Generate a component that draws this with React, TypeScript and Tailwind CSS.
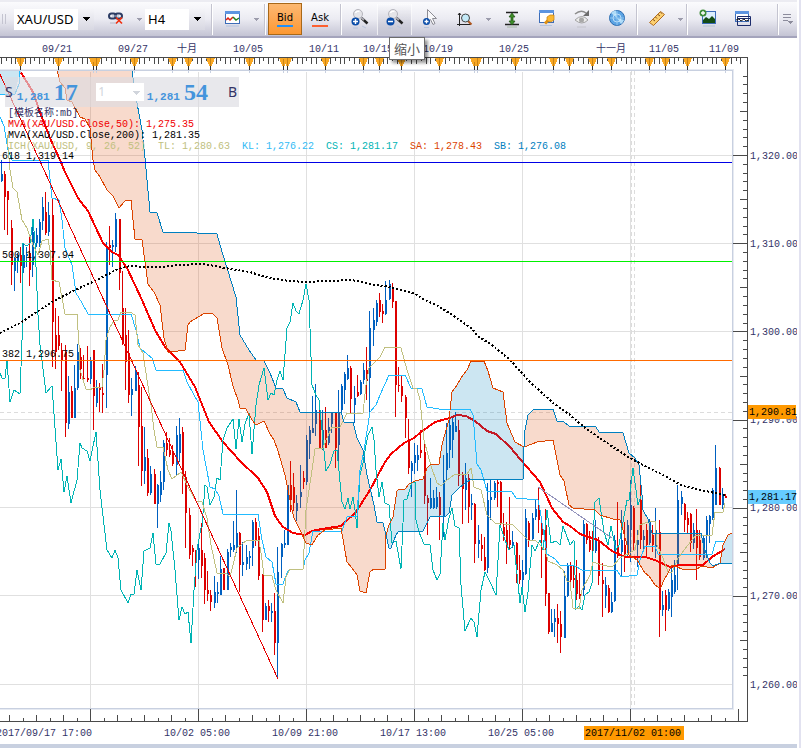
import type { ReactNode } from 'react';

type Candle = [number, number, number, number, number];

// [x, high, low, bodyTop, bodyBottom]
const UP: Candle[] = [
  [1, 160, 182, 174, 181], [14, 257, 291, 258, 271], [17, 253, 273, 255, 262], [23, 243, 273, 255, 268],
  [26, 247, 267, 254, 256], [32, 223, 277, 232, 265], [36, 228, 247, 235, 243], [39, 219, 247, 222, 243],
  [42, 197, 230, 207, 221], [48, 202, 236, 215, 232], [68, 376, 429, 392, 424], [74, 365, 418, 388, 418],
  [77, 344, 390, 352, 388], [90, 357, 384, 360, 379], [96, 380, 407, 387, 403], [106, 242, 408, 247, 375],
  [112, 240, 267, 245, 247], [115, 213, 252, 219, 247], [131, 378, 416, 389, 395], [135, 366, 391, 372, 391],
  [144, 427, 484, 457, 471], [150, 466, 495, 474, 493], [157, 484, 528, 485, 504], [160, 471, 502, 482, 495],
  [163, 440, 490, 443, 482], [176, 426, 476, 435, 465], [179, 418, 462, 434, 453], [198, 540, 579, 548, 560],
  [214, 576, 608, 592, 603], [217, 582, 603, 592, 594], [220, 556, 595, 569, 595], [227, 549, 590, 552, 590],
  [230, 543, 557, 547, 550], [233, 521, 552, 545, 550], [236, 490, 553, 533, 548], [242, 542, 576, 562, 565],
  [246, 545, 570, 557, 564], [249, 551, 569, 556, 558], [252, 520, 566, 522, 548], [265, 603, 620, 606, 620],
  [271, 603, 622, 611, 613], [277, 547, 678, 572, 643], [281, 543, 578, 544, 557], [284, 530, 548, 543, 545],
  [287, 485, 545, 485, 545], [296, 495, 521, 503, 511], [300, 465, 508, 492, 497], [306, 435, 485, 440, 482],
  [309, 426, 459, 430, 444], [312, 396, 433, 428, 433], [315, 384, 436, 410, 424], [322, 410, 450, 430, 448],
  [328, 418, 445, 427, 443], [331, 412, 433, 413, 424], [338, 390, 470, 412, 445], [341, 384, 412, 386, 410],
  [344, 372, 404, 374, 390], [347, 355, 380, 368, 379], [354, 386, 423, 398, 405], [360, 380, 395, 382, 394],
  [363, 363, 384, 370, 380], [369, 311, 412, 328, 378], [373, 308, 346, 320, 330], [376, 300, 326, 303, 322],
  [385, 281, 315, 300, 314], [389, 280, 300, 284, 299], [411, 461, 497, 463, 471], [414, 443, 474, 455, 463],
  [417, 445, 471, 455, 460], [430, 478, 509, 498, 508], [433, 490, 509, 498, 508], [436, 487, 509, 497, 507],
  [443, 455, 537, 480, 517], [446, 423, 480, 453, 470], [449, 420, 468, 425, 450], [452, 418, 458, 422, 440],
  [455, 412, 432, 426, 432], [465, 463, 510, 478, 490], [471, 494, 520, 503, 505], [478, 525, 558, 540, 544],
  [487, 483, 573, 500, 568], [490, 480, 520, 497, 500], [494, 481, 500, 483, 498], [512, 531, 548, 542, 545],
  [522, 560, 588, 572, 580], [525, 509, 575, 518, 574], [532, 513, 541, 518, 539], [535, 500, 520, 509, 517],
  [551, 609, 632, 623, 632], [554, 609, 637, 618, 622], [564, 571, 638, 596, 638], [567, 563, 597, 565, 596],
  [583, 520, 596, 524, 590], [595, 520, 553, 538, 551], [605, 577, 608, 585, 596], [611, 592, 613, 602, 612],
  [614, 535, 602, 540, 601], [621, 510, 576, 540, 552], [627, 520, 557, 525, 555], [630, 480, 562, 505, 530],
  [637, 530, 567, 540, 545], [643, 530, 550, 536, 540], [649, 519, 545, 521, 543], [655, 508, 558, 530, 547],
  [662, 591, 616, 605, 610], [668, 589, 611, 592, 609], [671, 568, 617, 580, 597], [674, 560, 594, 575, 592],
  [677, 485, 590, 500, 565], [681, 491, 515, 497, 504], [693, 523, 549, 530, 543], [703, 535, 560, 538, 558],
  [706, 516, 558, 520, 535], [709, 515, 543, 516, 524], [712, 488, 520, 490, 518], [715, 445, 505, 468, 505],
  [722, 488, 509, 495, 505],
];

const DOWN: Candle[] = [
  [4, 171, 230, 174, 197], [7, 191, 235, 191, 200], [11, 220, 285, 228, 265], [20, 247, 283, 255, 266],
  [29, 237, 286, 253, 270], [45, 192, 235, 212, 233], [52, 198, 367, 215, 322], [55, 308, 369, 335, 352],
  [58, 316, 350, 335, 346], [61, 343, 391, 350, 361], [65, 345, 437, 352, 423], [71, 386, 418, 391, 418],
  [80, 348, 379, 357, 369], [83, 355, 379, 378, 379], [87, 346, 382, 378, 380], [93, 350, 430, 350, 396],
  [99, 383, 412, 388, 390], [102, 364, 413, 393, 395], [109, 226, 265, 245, 248], [119, 219, 290, 219, 273],
  [122, 271, 345, 308, 344], [125, 308, 390, 335, 362], [128, 330, 403, 353, 395], [138, 372, 466, 385, 427],
  [141, 387, 486, 426, 471], [147, 449, 496, 458, 493], [154, 469, 504, 474, 504], [166, 432, 456, 443, 450],
  [169, 438, 457, 450, 455], [172, 445, 466, 452, 464], [182, 427, 494, 432, 478], [185, 471, 548, 477, 513],
  [189, 508, 559, 515, 555], [192, 545, 566, 548, 552], [195, 550, 587, 552, 563], [201, 523, 578, 550, 566],
  [204, 553, 604, 558, 590], [207, 571, 601, 590, 594], [210, 590, 611, 595, 602], [223, 568, 590, 568, 590],
  [239, 532, 592, 533, 565], [255, 518, 546, 522, 540], [258, 528, 580, 536, 576], [262, 574, 632, 575, 620],
  [268, 600, 622, 606, 611], [274, 593, 655, 611, 643], [290, 461, 512, 485, 500], [293, 473, 511, 487, 503],
  [303, 471, 489, 478, 482], [319, 404, 449, 417, 449], [325, 407, 448, 430, 448], [335, 412, 468, 412, 448],
  [350, 366, 413, 368, 399], [357, 375, 397, 392, 396], [366, 347, 400, 370, 381], [379, 293, 317, 300, 312],
  [382, 304, 323, 311, 314], [392, 283, 308, 287, 302], [395, 301, 417, 301, 385], [398, 367, 392, 385, 386],
  [401, 376, 402, 386, 396], [405, 395, 438, 397, 418], [408, 419, 474, 440, 468], [420, 430, 458, 450, 453],
  [424, 440, 504, 452, 496], [427, 495, 535, 498, 503], [439, 492, 540, 497, 515], [458, 420, 486, 430, 476],
  [462, 472, 524, 475, 489], [468, 474, 523, 478, 507], [474, 503, 563, 504, 544], [481, 534, 561, 545, 549],
  [484, 537, 571, 557, 570], [497, 480, 507, 482, 484], [500, 481, 525, 482, 523], [503, 513, 541, 527, 536],
  [506, 522, 564, 530, 545], [509, 497, 550, 540, 545], [516, 542, 583, 543, 570], [519, 555, 584, 570, 580],
  [528, 521, 547, 523, 541], [538, 487, 533, 508, 520], [541, 517, 578, 528, 535], [545, 509, 606, 525, 594],
  [548, 593, 634, 593, 632], [557, 604, 643, 618, 624], [560, 611, 653, 624, 637], [570, 562, 590, 565, 580],
  [573, 565, 588, 578, 580], [576, 560, 600, 580, 594], [579, 573, 599, 594, 597], [586, 523, 544, 524, 540],
  [589, 531, 552, 540, 550], [592, 531, 553, 542, 550], [598, 537, 585, 540, 576], [602, 563, 617, 580, 584],
  [608, 585, 613, 588, 612], [617, 502, 558, 545, 556], [624, 522, 572, 545, 558], [633, 506, 550, 508, 543],
  [640, 480, 549, 500, 540], [646, 524, 557, 530, 545], [652, 525, 552, 535, 545], [659, 520, 637, 532, 610],
  [665, 590, 631, 595, 610], [684, 503, 532, 504, 520], [687, 512, 533, 518, 525], [690, 513, 552, 514, 543],
  [696, 509, 580, 530, 548], [699, 530, 560, 540, 557], [719, 467, 505, 468, 505], [725, 494, 498, 496, 498],
];

const CHIKOU =
  '0,373 2,378 5,378 7,361 10,402 14,390 20,394 22,340 22,243 27,246 30,243 33,219 35,243 38,315 40,345 46,393 52,386 58,470 61,459 64,492 67,476 71,503 77,480 80,443 82,448 87,451 90,461 96,432 100,490 104,525 107,550 112,558 115,550 118,558 121,590 128,603 131,594 134,594 137,570 141,590 144,551 150,548 153,533 156,564 160,564 166,553 169,523 171,531 175,570 179,620 182,607 185,614 188,612 191,643 194,590 197,550 201,528 202,527 205,485 207,487 210,505 214,497 217,478 220,480 223,440 227,428 233,419 236,449 239,419 242,442 245,424 249,413 252,454 256,405 259,385 264,368 268,400 271,393 274,395 277,380 280,371 283,380 287,328 290,322 293,303 296,311 299,314 303,300 306,284 309,300 312,385 316,395 319,400 322,430 326,471 330,464 334,451 337,450 340,482 342,502 345,509 348,498 350,509 353,497 355,510 357,528 360,475 363,463 366,445 368,435 372,427 374,440 376,470 379,497 382,482 385,503 389,505 392,543 396,541 401,569 404,500 407,499 412,482 415,482 416,520 419,532 424,544 430,545 433,570 437,580 440,574 443,523 445,540 449,518 452,508 455,526 459,528 461,585 465,631 471,618 474,622 477,637 481,590 485,572 490,582 496,595 500,525 505,540 509,550 514,545 520,603 522,587 525,612 528,592 532,545 535,551 540,540 543,550 547,510 551,543 556,541 560,545 563,526 570,545 574,540 576,609 579,606 582,610 585,595 589,592 592,583 594,520 595,502 599,498 604,532 608,545 611,526 616,550 619,545 623,522 627,500 629,500 633,468 638,505 641,496';

const KIJUN =
  '0,117 4,126 8,150 12,160 48,160 52,198 59,200 62,220 65,248 72,265 76,293 82,303 88,314 131,314 136,330 140,348 148,355 152,358 156,370 183,370 187,382 194,395 198,402 203,450 210,487 215,489 219,496 223,514 258,514 262,540 266,557 272,562 276,584 283,584 287,573 290,569 303,569 305,560 309,553 313,531 342,531 347,517 357,516 360,470 364,450 368,425 370,412 376,405 380,395 389,375 405,375 411,388 422,389 427,407 439,409 470,409 473,415 477,464 481,470 487,491 512,492 516,498 538,500 540,510 547,554 555,559 560,565 575,566 582,570 617,570 621,577 637,575 640,560 645,546 655,546 658,554 712,554 716,541 725,541';

const TENKAN =
  '7,135 10,170 13,188 17,192 22,220 27,228 33,245 38,255 42,241 48,239 50,250 52,280 59,282 62,298 65,314 77,314 79,345 80,370 86,389 90,390 95,387 102,387 104,370 106,340 110,327 114,321 118,320 121,312 130,312 135,315 138,345 143,353 147,380 151,405 154,430 157,447 163,447 168,470 172,479 181,472 188,487 196,501 202,502 207,518 211,545 217,573 226,573 230,577 233,565 237,548 247,540 259,540 262,560 264,575 272,576 276,590 283,603 286,577 290,569 303,569 306,510 312,470 315,449 323,448 326,440 332,427 340,427 347,413 363,413 366,385 369,368 380,357 385,347 401,348 407,370 413,388 417,389 420,400 424,440 431,466 437,483 441,486 447,480 454,475 467,474 471,468 474,487 481,490 487,515 495,523 513,525 520,532 528,540 536,541 545,550 548,561 557,565 563,570 567,581 570,582 573,608 579,609 582,590 590,575 593,562 602,565 612,567 620,558 635,550 640,525 645,523 655,521 657,545 663,558 668,572 672,572 678,558 688,545 696,535 712,535 715,512 723,512 725,503';

const SPAN_B_1 =
  '132,70 134,85 137,103 142,130 145,158 150,212 157,213 163,232 197,233 217,234 223,255 236,297 240,335 249,350 256,360 264,361 270,373 276,388 283,389 287,398 296,402 300,412 341,412 344,422 353,422 357,438 363,450 367,475 374,505 377,522 383,523 386,535';
const SPAN_B_2 = '386,535 389,548 391,548 396,535 399,531 423,531 430,517 446,516 449,513 452,495 460,487 470,480 523,479 524,447';
const SPAN_B_3 =
  '524,447 525,430 528,415 534,409 553,409 557,421 564,422 569,426 596,427 599,432 623,433 629,453 635,458 639,465 642,495 643,510 648,519 652,533 701,533 704,548 710,563 712,565';
const SPAN_B_4 = '712,565 715,565 721,563 732,563';

const SPAN_A_1 =
  '57,70 60,82 65,88 67,100 72,102 80,117 85,119 90,128 93,160 95,170 100,177 107,190 113,196 119,208 125,201 131,200 135,239 142,240 145,262 148,284 154,292 160,305 164,338 168,352 171,352 185,350 188,325 190,322 198,317 205,313 213,314 217,318 222,348 228,365 233,386 238,400 240,408 246,409 252,420 256,425 264,421 270,434 274,440 278,451 285,475 292,510 294,518 300,530 306,543 312,545 318,535 325,530 341,528 347,562 352,568 357,575 360,591 366,593 370,572 374,569 385,569 386,535';
const SPAN_A_2 =
  '386,535 389,525 393,517 397,491 399,489 405,489 409,484 415,481 423,479 427,468 431,464 439,464 442,445 446,430 449,420 452,392 457,385 463,375 467,370 471,361 484,361 488,371 493,388 503,392 507,423 509,428 515,442 524,447';
const SPAN_A_3 =
  '524,447 532,444 537,442 553,440 557,460 560,475 564,481 569,505 573,508 595,510 600,515 613,519 620,520 623,530 627,545 629,555 637,560 645,573 649,576 655,585 658,587 661,587 664,580 668,573 672,565 677,567 682,569 695,570 702,566 712,568';
const SPAN_A_4 = '712,568 720,563 723,545 728,535 732,533';

const MVA50 =
  '20,71 33,92 41,115 50,138 60,160 65,172 78,198 88,211 95,226 103,243 112,252 118,255 127,268 142,300 155,330 165,347 180,362 195,387 209,422 223,442 240,461 258,478 267,492 275,516 283,527 293,533 305,535 312,531 322,529 341,526 356,512 370,490 385,462 391,454 404,443 414,438 421,432 435,422 450,418 457,415 466,416 475,421 487,431 496,434 510,447 520,459 540,482 552,508 563,522 570,526 580,534 598,540 612,551 625,557 645,557 655,560 670,567 680,565 703,565 712,557 725,549';

const MVA200 =
  '0,333 10,328 20,323 52,302 75,290 95,281 118,269 130,266 147,267 160,267 180,265 203,264 215,266 230,269 250,272 262,276 275,279 290,281 306,282 350,280 358,281 370,284 390,287 402,290 415,294 425,300 440,307 455,317 472,329 478,336 493,346 503,354 510,360 530,382 552,402 570,415 584,427 610,445 628,457 643,465 663,475 683,486 710,492 725,495';

const GRID_X = [90, 198, 306, 414, 522, 630];
const GRID_Y = [155, 243, 331, 419, 507, 595, 684];

const TOP_DATES: [number, string][] = [
  [57, '09/21'], [133, '09/27'], [187, '十月'], [248, '10/05'], [324, '10/11'], [378, '10/15'],
  [438, '10/19'], [514, '10/25'], [611, '十一月'], [664, '11/05'], [724, '11/09'],
];

const SESSIONS = [
  20, 58, 93, 96, 134, 172, 188, 210, 249, 283, 287, 325, 363, 379, 401, 439, 474, 477, 515, 553, 569, 592, 611, 649,
  665, 687, 725,
];

const BOTTOM_DATES: [number, string][] = [
  [44, '2017/09/17 17:00'], [197, '10/02 05:00'], [305, '10/09 21:00'], [413, '10/17 13:00'], [521, '10/25 05:00'],
];

const FIBS: [number, string, string, string][] = [
  [162, '#0000e6', '618', '1,319.14'],
  [261, '#00f000', '500', '1,307.94'],
  [360, '#ff6a00', '382', '1,296.75'],
];

const reverse = (points: string) => points.split(' ').reverse().join(' ');

function Candles({ data, color }: { data: Candle[]; color: string }) {
  return (
    <g fill={color}>
      {data.map(([x, high, low, top, bottom]) => (
        <g key={x}>
          <rect x={x} y={high} width={1} height={low - high} />
          <rect x={x} y={top} width={2} height={Math.max(bottom - top, 1)} />
        </g>
      ))}
    </g>
  );
}

function TopRuler() {
  const minor = Array.from({ length: 156 }, (_, i) => Math.round(1 + i * 4.77)).filter((x) => x < 746);
  return (
    <g>
      <g fill="#4a4a4a">
        <rect x={0} y={57} width={748} height={1} />
        {minor.map((x, i) => (
          <rect key={x} x={x} y={58} width={1} height={i % 3 === 1 ? 3 : 6} />
        ))}
      </g>
      {SESSIONS.map((x) => (
        <g key={x}>
          <path d={`M${x - 4} 58h9l-2 5-2 4h-1l-2-4z`} fill="#f9a825" />
          <rect x={x} y={58} width={1} height={8} fill="#c88418" />
          <rect x={x} y={66} width={1} height={4} fill="#333" />
          <rect x={x} y={70} width={1} height={3} fill="#c8d0e0" />
        </g>
      ))}
    </g>
  );
}

function Axes() {
  const right = Array.from({ length: 69 }, (_, i) => i - 9).map((i) => ({ i, y: Math.round(155 + i * 8.82) }));
  const bottom = Array.from({ length: 55 }, (_, i) => ({ i, x: Math.round(9 + i * 13.5) }));
  return (
    <g fill="#4a4a4a">
      <rect x={747} y={57} width={1} height={665} />
      <rect x={0} y={721} width={748} height={1} />
      {right
        .filter(({ y }) => y > 72 && y < 706)
        .map(({ i, y }) => {
          const len = i % 10 === 0 ? 14 : i % 5 === 0 ? 7 : 4;
          return <rect key={i} x={747 - len} y={y} width={len} height={1} />;
        })}
      {bottom.map(({ i, x }) => {
        const len = i % 8 === 6 ? 12 : i % 2 === 0 ? 6 : 3;
        return <rect key={i} x={x} y={721 - len} width={1} height={len} />;
      })}
    </g>
  );
}

function PriceChart() {
  return (
    <svg
      viewBox="0 38 797 706"
      className="block h-auto w-full font-['Liberation_Mono','Noto_Sans_CJK_SC',monospace] text-[10px]"
      role="img"
      aria-label="XAU/USD H4"
    >
      <defs>
        <clipPath id="plot">
          <rect x={0} y={71} width={732} height={638} />
        </clipPath>
      </defs>

      <g shapeRendering="crispEdges">
        <g fill="#e0e0e0">
          {GRID_X.map((x) => (
            <rect key={x} x={x} y={72} width={1} height={637} />
          ))}
          {GRID_Y.map((y) => (
            <rect key={y} x={0} y={y} width={732} height={1} />
          ))}
        </g>
        <g stroke="#dcdcdc" strokeDasharray="4 3">
          <path d="M631.5 71V709M634.5 71V709" />
          <path d="M0 412.5H732" />
        </g>

        {/* Chart frame */}
        <path d="M0 70.5H732.5V708.5H0" fill="none" stroke="#c8d0e0" strokeWidth={1} />
        <path d="M0 69.5H733.5V709.5H0" fill="none" stroke="#e6eaf2" strokeWidth={1} />

        <g clipPath="url(#plot)" fill="none">
          <Candles data={UP} color="#0060c0" />
          <Candles data={DOWN} color="#dc0000" />

          {/* Kumo */}
          <polygon points={`${SPAN_A_1} ${reverse(SPAN_B_1)}`} fill="#dc4400" fillOpacity={0.2} />
          <polygon points={`${SPAN_A_3} ${reverse(SPAN_B_3)}`} fill="#dc4400" fillOpacity={0.2} />
          <polyline points={MVA50} stroke="#f50000" strokeWidth={2} />
          <polygon points={`${SPAN_A_2} ${reverse(SPAN_B_2)}`} fill="#0080c0" fillOpacity={0.2} />
          <polygon points={`${SPAN_A_4} ${reverse(SPAN_B_4)}`} fill="#0080c0" fillOpacity={0.2} />
          <polygon points="0,70 20,70 17,84 15,94 0,94" fill="#0080c0" fillOpacity={0.2} />
          <polyline points="20,70 19,84 15,94 0,94" stroke="#22bbff" />

          <polyline points={CHIKOU} stroke="#00b4b4" />
          <polyline points={KIJUN} stroke="#22bbff" />
          <polyline points={TENKAN} stroke="#c0c080" />
          <polyline points={`${SPAN_A_1} ${SPAN_A_2} ${SPAN_A_3} ${SPAN_A_4}`} stroke="#dc4400" />
          <polyline points={`${SPAN_B_1} ${SPAN_B_2} ${SPAN_B_3} ${SPAN_B_4}`} stroke="#0080c0" />
          <polyline points={MVA200} stroke="#000" strokeWidth={2} strokeDasharray="2 2" />

          <path d="M-2 70L278 679" stroke="#e60000" />
          <path d="M538 487L612 538" stroke="#9494bc" />
          {FIBS.map(([y, color]) => (
            <rect key={y} x={0} y={y} width={732} height={1} fill={color} />
          ))}
        </g>

        <TopRuler />
        <Axes />
      </g>

      <g fill="#333366">
        {TOP_DATES.map(([x, label]) => (
          <text key={label} x={x} y={52} textAnchor="middle">
            {label}
          </text>
        ))}
        {GRID_Y.map((y, i) => (
          <text key={y} x={750} y={y + 4}>
            {`1,${320 - i * 10}.00`}
          </text>
        ))}
        {BOTTOM_DATES.map(([x, label]) => (
          <text key={label} x={x} y={736} textAnchor="middle">
            {label}
          </text>
        ))}
      </g>

      {FIBS.map(([y, , level, price]) => (
        <text key={level} x={2} y={y - 3}>
          {level} {price}
        </text>
      ))}

      <rect x={748} y={405} width={48} height={14} fill="#ff9900" />
      <rect x={748} y={490} width={48} height={14} fill="#66ccff" />
      <rect x={584} y={726} width={100} height={14} fill="#ff9900" />
      <text x={749} y={415}>1,290.81</text>
      <text x={749} y={500}>1,281.17</text>
      <text x={585} y={736}>2017/11/02 01:00</text>
    </svg>
  );
}

function Quote({ label, side, base, pips }: { label: string; side: 'sell' | 'buy'; base: string; pips: string }) {
  const letter = <span className="font-['Noto_Sans',sans-serif] text-sm text-[#333366]">{side === 'sell' ? 'S' : 'B'}</span>;
  return (
    <button aria-label={label} className={`flex h-full items-center ${side === 'sell' ? 'gap-1' : 'gap-5'}`}>
      {side === 'sell' && letter}
      <span className="flex items-baseline gap-1 font-['Liberation_Serif',serif] font-bold text-[#4494dc]">
        <span className="font-['Liberation_Mono',monospace] text-[11px]">{base}</span>
        <span className="text-2xl">{pips}</span>
      </span>
      {side === 'buy' && letter}
    </button>
  );
}

function QuotePanel() {
  return (
    <div className="flex h-[30px] w-[234px] items-center justify-between bg-[#dcdce2]/65 pr-0.5">
      <Quote label="Sell" side="sell" base="1,281" pips="17" />
      <span className="relative ml-4 flex">
        <select aria-label="Amount" disabled className="h-[18px] w-12 appearance-none bg-white pl-0.5 text-xs text-gray-300">
          <option>1</option>
        </select>
        <Caret className="pointer-events-none absolute top-2 right-1 text-gray-300" />
      </span>
      <Quote label="Buy" side="buy" base="1,281" pips="54" />
    </div>
  );
}

function Legend() {
  return (
    <div className="pl-[3px] font-['Liberation_Mono','Noto_Sans_CJK_SC',monospace] text-[10px] leading-[11px] whitespace-pre">
      <p className="text-[#333366]">[模板名称:mb]</p>
      <p className="text-[#f00000]">MVA(XAU/USD.Close,50): 1,275.35</p>
      <p className="text-black">MVA(XAU/USD.Close,200): 1,281.35</p>
      <p className="text-[#c0c080]">
        {'ICH(XAU/USD, 9, 26, 52)  TL: 1,280.63  '}
        <span className="text-[#33bbf5]">{'KL: 1,276.22  '}</span>
        <span className="text-[#00b4b4]">{'CS: 1,281.17  '}</span>
        <span className="text-[#dc4400]">{'SA: 1,278.43  '}</span>
        <span className="text-[#0080c0]">SB: 1,276.08</span>
      </p>
    </div>
  );
}

function Caret({ className = '' }: { className?: string }) {
  return (
    <svg viewBox="0 0 7 4" width={7} height={4} className={className} shapeRendering="crispEdges">
      <path d="M0 0h7L3.500 4z" fill="currentColor" />
    </svg>
  );
}

function Separator() {
  return <span className="h-[31px] w-0.5 shrink-0 border-l border-[#c4c4d0] bg-white" />;
}

function DropArrow({ label }: { label: string }) {
  return (
    <button aria-label={label} className="flex h-full w-3 shrink-0 items-center justify-center text-[#9c9cac]">
      <svg viewBox="0 0 5 3" width={5} height={3} shapeRendering="crispEdges">
        <path d="M0 0h5L2.500 3z" fill="currentColor" />
      </svg>
    </button>
  );
}

function ComboBox({ label, value, width }: { label: string; value: string; width: string }) {
  return (
    <span className={`relative flex h-[21px] shrink-0 ${width}`}>
      <select
        aria-label={label}
        className="w-full appearance-none bg-white pl-[3px] font-['Noto_Sans',sans-serif] text-[13px] leading-5 text-black"
      >
        <option>{value}</option>
      </select>
      <span className="pointer-events-none absolute inset-y-0 right-0 flex w-4 items-center justify-center bg-gradient-to-b from-[#f4f4f8] to-[#d8d8e2]">
        <Caret />
      </span>
    </span>
  );
}

function ToolButton({ label, hovered, children }: { label: string; hovered?: boolean; children: ReactNode }) {
  return (
    <button
      aria-label={label}
      className={`flex h-[31px] w-[35px] shrink-0 items-center justify-center ${
        hovered ? 'border-x border-white/70 bg-gradient-to-b from-white/30 to-[#c4c4d2]' : ''
      }`}
    >
      <svg viewBox="0 0 18 20" width={18} height={20}>
        {children}
      </svg>
    </button>
  );
}

function Magnifier({ minus }: { minus?: boolean }) {
  return (
    <>
      <path d="M10.500 9l6 5.500" stroke="#222" strokeWidth={2.500} />
      <path d="M10 8.500l3 2.500" stroke="#a8a8b0" strokeWidth={2} />
      <circle cx={7} cy={5} r={4.500} fill="#e4e4e8" stroke="#b4b4bc" />
      <path d="M4.500 4a3 3 0 0 1 4-1.500" stroke="#fff" strokeWidth={1.500} fill="none" />
      <circle cx={4.500} cy={12.500} r={4} fill="#0a4ca8" />
      <path d={minus ? 'M2 12.500h5' : 'M2 12.500h5M4.500 10v5'} stroke="#fff" strokeWidth={1.500} />
      <path d="M2 19h5M11 17l4 2" stroke="#b8c4dc" />
    </>
  );
}

function Toolbar() {
  return (
    <header className="relative flex h-[38px] items-center overflow-visible border-t-2 border-b-2 border-t-[#ececf2] border-b-[#a4a4bc] bg-gradient-to-b from-[#fbfbfd] via-[#ebebf2] to-[#c4c4d4] text-black">
      <span className="mr-1.5 ml-0.5 flex gap-0.5">
        <i className="h-2.5 w-px bg-[#c4c4d0]" />
        <i className="h-2.5 w-px bg-[#c4c4d0]" />
      </span>
      <ComboBox label="Symbol" value="XAU/USD" width="ml-0.5 w-20" />
      <span className="w-1 shrink-0" />
      <ToolButton label="Unlink">
        <g fill="none" stroke="#2c3c64" strokeWidth={2}>
          <rect x={2} y={4.500} width={7} height={5} rx={2.500} />
          <rect x={8} y={4.500} width={7} height={5} rx={2.500} />
        </g>
        <path d="M5 7h7" stroke="#a8b4cc" />
        <path d="M9 8.500l6 6M15 8.500l-6 6" stroke="#f03010" strokeWidth={1.700} />
        <path d="M3 14h6" stroke="#b8b8c8" />
      </ToolButton>
      <DropArrow label="Link options" />
      <ComboBox label="Period" value="H4" width="w-[60px]" />
      <span className="w-1.5 shrink-0" />
      <Separator />
      <span className="w-0.5 shrink-0" />
      <ToolButton label="Chart type">
        <rect x={1.500} y={2.500} width={14} height={12} fill="#fff" stroke="#3c6cb8" />
        <rect x={1} y={2} width={15} height={3} fill="#5c94e0" />
        <path d="M2 11l2-2 2 2 3-3" stroke="#e02010" strokeWidth={1.500} fill="none" />
        <path d="M9 8l3 3 3-2" stroke="#208020" strokeWidth={1.500} fill="none" />
        <path d="M2 17h13" stroke="#b4c4e0" />
      </ToolButton>
      <DropArrow label="Chart types" />
      <span className="w-0.5 shrink-0" />
      <Separator />
      <button className="ml-0.5 flex h-8 w-[34px] shrink-0 flex-col items-center justify-center border border-[#a86818] bg-gradient-to-b from-[#fcb870] to-[#fc9830] font-['DejaVu_Sans',sans-serif] text-[10px] leading-3">
        Bid
        <span className="mt-px h-0.5 w-4 bg-[#2090f8]" />
      </button>
      <button className="flex h-8 w-9 shrink-0 flex-col items-center justify-center font-['DejaVu_Sans',sans-serif] text-[10px] leading-3">
        Ask
        <span className="mt-px h-0.5 w-4 bg-[#fc6030]" />
      </button>
      <span className="w-0.5 shrink-0" />
      <Separator />
      <ToolButton label="放大">
        <Magnifier />
      </ToolButton>
      <div className="relative">
        <ToolButton label="缩小" hovered>
          <Magnifier minus />
        </ToolButton>
        <span
          role="tooltip"
          className="absolute top-[33px] left-3 z-20 border border-[#6c6c6c] bg-white px-1 py-0.5 font-['Noto_Sans_CJK_SC',sans-serif] text-[13px] leading-[17px] whitespace-nowrap text-[#555] shadow-[3px_3px_3px_rgba(0,0,0,0.4)]"
        >
          缩小
        </span>
      </div>
      <ToolButton label="Cursor">
        <path d="M6.500.5v13l3-3 2.500 5 2-1-2.500-5h4z" fill="#f8f8fa" stroke="#8c8c94" />
        <circle cx={5.500} cy={12.500} r={3.500} fill="#0a4ca8" />
        <path d="M3.500 12.500h4M5.500 10.500v4" stroke="#fff" strokeWidth={1.300} />
        <path d="M3 18.500h5" stroke="#b8c4dc" />
      </ToolButton>
      <ToolButton label="Zoom area">
        <path d="M3.500 4v13M1 15.500h14M2 6l1.500-2L5 6" stroke="#222" fill="none" />
        <path d="M12 12l3.500 3.500" stroke="#b05820" strokeWidth={2} />
        <circle cx={9.500} cy={9} r={4} fill="#c4eaf8" stroke="#444" />
      </ToolButton>
      <DropArrow label="Zoom options" />
      <ToolButton label="Fit height">
        <path d="M3 3.500h12M2 15.500h14" stroke="#222" strokeWidth={1.300} />
        <path d="M9 4l3 4h-2v4h2l-3 4-3-4h2V8H6z" fill="#3c8c28" stroke="#1c5010" strokeWidth={0.700} />
        <path d="M4 18h10" stroke="#a8b8a8" />
      </ToolButton>
      <ToolButton label="Properties">
        <rect x={1.500} y={1.500} width={14} height={12} fill="#fff" stroke="#3c6cb8" />
        <rect x={1} y={1} width={15} height={3} fill="#5c94e0" />
        <path d="M7 14.500l4-4" stroke="#e09010" strokeWidth={3} />
        <path d="M9 8l3-2h4v5l-3 2-4-1z" fill="#fcb830" stroke="#c07c10" strokeWidth={0.700} />
        <path d="M2 16.500h12" stroke="#b4c4e0" />
      </ToolButton>
      <ToolButton label="Show">
        <path d="M2 5q6-5 11-1" stroke="#8c8c8c" strokeWidth={1.500} fill="none" />
        <path d="M16 1v6h-6z" fill="#6c6c6c" />
        <path d="M2 11q7-7 13 0-6 6-13 0z" fill="#ececec" stroke="#a4a4a4" />
        <circle cx={8.500} cy={11} r={2.500} fill="#a8a8a8" />
        <path d="M4 18h9" stroke="#c4c4cc" />
      </ToolButton>
      <ToolButton label="Radar">
        <circle cx={9} cy={9} r={7.500} fill="#5ca4e4" stroke="#2c6cb0" />
        <path d="M9 9L3 4a7.500 7.500 0 0 1 5-2.500zM9 9l7 2a7 7 0 0 1-3 4z" fill="#b0dcf8" />
        <circle cx={9} cy={9} r={4} fill="none" stroke="#d0ecfc" strokeWidth={0.800} />
        <path d="M9 1.500v15M1.500 9h15" stroke="#a0d0f4" strokeWidth={0.700} />
      </ToolButton>
      <span className="w-0.5 shrink-0" />
      <Separator />
      <span className="w-px shrink-0" />
      <ToolButton label="Ruler">
        <path d="M1.500 13.500l11-11 4 3-11 11z" fill="#fcd070" stroke="#b06c20" />
        <path d="M5 10.500l2 1.500M7.500 8l1.500 1.500M10 5.500l2 1.500M12.500 3.500l1 1" stroke="#7c4c18" />
      </ToolButton>
      <DropArrow label="Drawing tools" />
      <Separator />
      <span className="w-0.5 shrink-0" />
      <ToolButton label="Add image">
        <rect x={3.500} y={2.500} width={13} height={12} fill="#dceefc" stroke="#3c6cb8" />
        <path d="M4 14v-3l3-3 3 2 3-3 3 3v4z" fill="#144c14" />
        <circle cx={4} cy={4} r={3.500} fill="#3c8c38" />
        <path d="M2 4h4M4 2v4" stroke="#fff" strokeWidth={1.300} />
        <path d="M4 17h12" stroke="#b4c4d0" />
      </ToolButton>
      <ToolButton label="Windows">
        <rect x={1.500} y={2.500} width={13} height={10} fill="#fff" stroke="#3c6cb8" />
        <rect x={1} y={2} width={14} height={3} fill="#5c94e0" />
        <path d="M3.500 7.500h13v9h-13zM3.500 9.500h13" fill="none" stroke="#1c2c6c" />
        <path d="M2 11l3-1 2 2 3-2 2 2 3-1" stroke="#222" fill="none" />
      </ToolButton>
      <span className="flex-1" />
      <Separator />
      <button aria-label="More" className="flex h-full w-[18px] shrink-0 items-center justify-center text-[#8c8c9c]">
        <svg viewBox="0 0 10 11" width={10} height={11} shapeRendering="crispEdges">
          <path d="M0 .5h8M0 3.500h8M0 6.500h5" stroke="currentColor" />
          <path d="M4 7h6l-3 3z" fill="currentColor" />
        </svg>
      </button>
    </header>
  );
}

export default function App() {
  return (
    <div className="flex w-full items-stretch bg-white">
      <div className="min-w-0 flex-1">
        <Toolbar />
        <main className="relative">
          <PriceChart />
          <div className="absolute top-[39px] left-[5px] space-y-[1px]">
            <QuotePanel />
            <Legend />
          </div>
        </main>
        <footer className="h-1 bg-[#c8d0e0]" />
      </div>
      <aside className="w-1 shrink-0 border-l-2 border-white bg-[#e2e2f0]" />
    </div>
  );
}
